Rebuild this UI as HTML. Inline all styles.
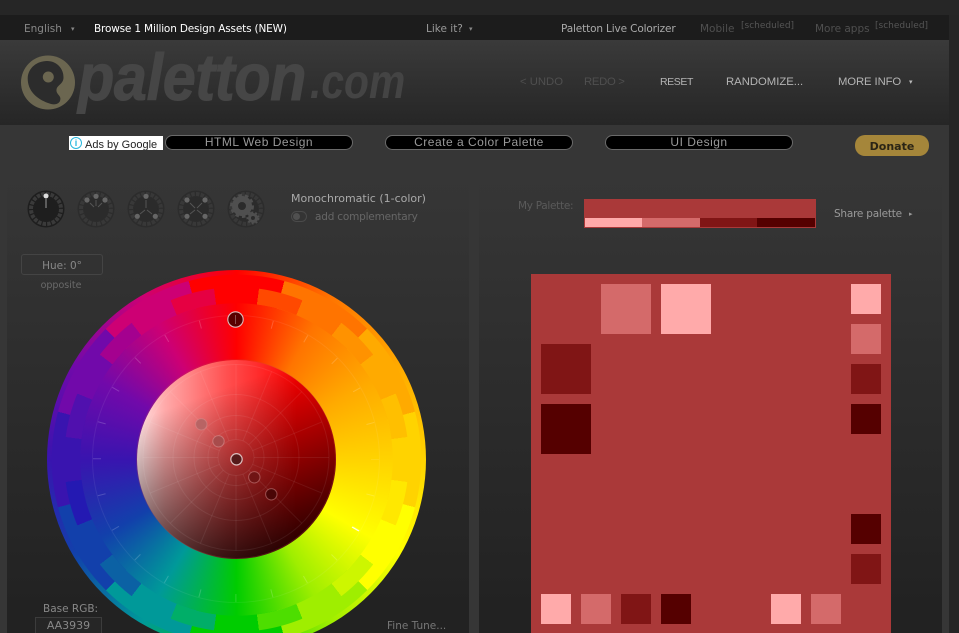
<!DOCTYPE html>
<html><head><meta charset="utf-8"><style>
html,body{margin:0;padding:0;width:959px;height:633px;overflow:hidden;background:#232323;font-family:"DejaVu Sans","Liberation Sans",sans-serif}
#w{position:relative;width:959px;height:633px;overflow:hidden}
.a{position:absolute;white-space:nowrap}
.t{position:absolute;white-space:nowrap;font-size:10.5px;line-height:14px}
.h{position:absolute;white-space:nowrap;font:11.3px/14px "Liberation Sans",sans-serif;top:75px}
.s{position:absolute;background:#aa3939}
.p{position:absolute;box-sizing:border-box;background:#000;border:1px solid #6a6a6a;border-radius:8px;height:15px;top:135px;color:#999;font:12px/13px "Liberation Sans",sans-serif;letter-spacing:.5px;text-align:center}
.r{position:absolute;border-radius:50%}
</style></head><body><div id="w">
<div class="a" style="left:0;top:0;width:959px;height:15px;background:#262626"></div>
<div class="a" style="left:0;top:15px;width:949px;height:25px;background:#1c1c1c"></div>
<div class="a" style="left:0;top:40px;width:949px;height:85px;background:linear-gradient(#3a3a3a,#262626)"></div>
<div class="a" style="left:0;top:125px;width:949px;height:508px;background:#363636"></div>
<div class="a" style="left:7px;top:165px;width:462px;height:468px;background:linear-gradient(#363636,#353535 8%,#222 95%)"></div>
<div class="a" style="left:479px;top:165px;width:463px;height:468px;background:linear-gradient(#363636,#353535 8%,#222 95%)"></div>
<div class="a" style="left:949px;top:15px;width:10px;height:618px;background:#252525"></div>

<div class="t" style="left:24px;top:22px;color:#888">English</div><div class="t" style="left:71px;top:22px;color:#888;font-size:7px">▾</div>
<div class="t" style="left:94px;top:22px;color:#fff;letter-spacing:-.17px">Browse 1 Million Design Assets (NEW)</div>
<div class="t" style="left:426px;top:22px;color:#999">Like it?</div><div class="t" style="left:469px;top:22px;color:#888;font-size:7px">▾</div>
<div class="t" style="left:561px;top:22px;color:#aaa;letter-spacing:-.14px">Paletton Live Colorizer</div>
<div class="t" style="left:700px;top:22px;color:#4f4f4f">Mobile</div>
<div class="t" style="left:741px;top:19px;color:#555;font-size:9px">[scheduled]</div>
<div class="t" style="left:815px;top:22px;color:#4f4f4f">More apps</div>
<div class="t" style="left:875px;top:19px;color:#555;font-size:9px">[scheduled]</div>

<svg class="a" style="left:18px;top:52px" width="60" height="60" viewBox="0 0 60 60">
<circle cx="30" cy="30.500" r="27" fill="#6b6650"/>
<path d="M29 9C39 9 46 17 45.500 26C45 33 38 33 38.500 39C39 43 44 44 42 49C40 53 35 53 30 51C19 47 9.500 39 9.700 26C10 16 19 9 29 9Z" fill="#2c2c2c"/>
<circle cx="30.300" cy="25" r="5.500" fill="#6b6650"/></svg>
<div class="a" style="left:78px;top:37px;font:italic bold 66px/80px 'Liberation Sans',sans-serif;color:#464646;letter-spacing:-.4px;-webkit-text-stroke:1px #464646;transform:scaleX(.9);transform-origin:0 0">paletton</div>
<div class="a" style="left:310px;top:53px;font:italic bold 48px/60px 'Liberation Sans',sans-serif;color:#444;transform:scaleX(.85);transform-origin:0 0">.com</div>

<div class="h" style="left:520px;color:#4f4f4f">&lt; UNDO</div>
<div class="h" style="left:584px;color:#4f4f4f;letter-spacing:-.3px">REDO &gt;</div>
<div class="h" style="left:660px;color:#b4b4b4;font-size:10.5px;letter-spacing:-.4px">RESET</div>
<div class="h" style="left:726px;color:#b4b4b4">RANDOMIZE...</div>
<div class="h" style="left:838px;color:#b4b4b4;letter-spacing:-.1px">MORE INFO</div>
<div class="t" style="left:909px;top:75px;color:#bbb;font-size:7px">▾</div>

<div class="a" style="left:69px;top:136px;width:94px;height:14px;background:#fff;color:#222;font:11px/18px 'Liberation Sans',sans-serif;text-indent:16px;overflow:hidden">Ads by Google</div>
<div class="a" style="left:70px;top:137px;width:10px;height:10px;border:1px solid #28b7dd;border-radius:50%;color:#28b7dd;font:bold 9px/10px 'Liberation Sans',sans-serif;text-align:center">i</div>
<div class="p" style="left:165px;width:188px">HTML Web Design</div>
<div class="p" style="left:385px;width:188px">Create a Color Palette</div>
<div class="p" style="left:605px;width:188px">UI Design</div>
<div class="a" style="left:855px;top:135px;width:74px;height:21px;border-radius:10px;background:#a5863a;color:#2a2415;font:bold 11px/23px 'DejaVu Sans',sans-serif;text-align:center">Donate</div>

<svg class="a" style="left:20px;top:185px" width="250" height="50" viewBox="0 0 250 50">
<defs><g id="k"><circle r="18.500" fill="#2c2c2c"/><circle r="15" fill="none" stroke="#383838" stroke-width="4" stroke-dasharray="3.500 1.200"/><circle r="12" fill="#2b2b2b"/></g></defs>
<g transform="translate(26,24)"><circle r="18.500" fill="#1e1e1e"/><circle r="15" fill="none" stroke="#3a3a3a" stroke-width="4" stroke-dasharray="3.500 1.200"/><circle r="12" fill="#1e1e1e"/><circle cy="-13" r="2.500" fill="#ddd"/><path d="M0-10V-1" stroke="#999"/></g>
<g transform="translate(76,24)" stroke="#555" fill="#666"><use href="#k" stroke="none"/><path d="M0-9V-3M-6-6-2-2M6-6 2-2" fill="none"/><circle cy="-12.700" r="2.600" stroke="none"/><circle cx="-9" cy="-9" r="2.600" stroke="none"/><circle cx="9" cy="-9" r="2.600" stroke="none"/></g>
<g transform="translate(126,24)" stroke="#555" fill="#666"><use href="#k" stroke="none"/><path d="M0-9V-1M-6 5-1 1M6 5 1 1" fill="none"/><circle cy="-12.700" r="2.600" stroke="none"/><circle cx="-8.700" cy="7.300" r="2.600" stroke="none"/><circle cx="9.300" cy="7.300" r="2.600" stroke="none"/></g>
<g transform="translate(176,24)" stroke="#555" fill="#666"><use href="#k" stroke="none"/><path d="M-6-6-1-1M6-6 1-1M-6 5-1 1M6 5 1 1" fill="none"/><circle cx="-9" cy="-9" r="2.600" stroke="none"/><circle cx="9" cy="-9" r="2.600" stroke="none"/><circle cx="-9" cy="7.300" r="2.600" stroke="none"/><circle cx="9" cy="7.300" r="2.600" stroke="none"/></g>
<g transform="translate(226,24)"><use href="#k"/><circle cx="-4" cy="-3" r="7" fill="none" stroke="#4f4f4f" stroke-width="6"/><circle cx="-4" cy="-3" r="10.500" fill="none" stroke="#4f4f4f" stroke-width="3" stroke-dasharray="3.500 3"/><circle cx="7" cy="9" r="3.500" fill="none" stroke="#4f4f4f" stroke-width="3"/><circle cx="7" cy="9" r="5.500" fill="none" stroke="#4f4f4f" stroke-width="2" stroke-dasharray="2 2"/></g>
</svg>
<div class="t" style="left:291px;top:192px;color:#aaa;font-size:11px">Monochromatic (1-color)</div>
<div class="a" style="left:291px;top:211px;width:14px;height:9px;border:1px solid #4a4a4a;border-radius:6px"></div>
<div class="r" style="left:293px;top:213px;width:7px;height:7px;background:#505050"></div>
<div class="t" style="left:315px;top:210px;color:#666;letter-spacing:-.2px">add complementary</div>

<div class="a" style="left:21px;top:254px;width:80px;height:19px;border:1px solid #444;border-radius:3px;color:#888;font-size:10.5px;line-height:22px;text-align:center">Hue: 0°</div>
<div class="a" style="left:21px;top:279px;width:80px;color:#6a6a6a;font-size:9.500px;line-height:14px;text-align:center">opposite</div>
<div class="t" style="left:43px;top:602px;color:#888">Base RGB:</div>
<div class="a" style="left:35px;top:617px;width:65px;height:18px;border:1px solid #3c3c3c;background:#262626;color:#888;font-size:11px;line-height:16px;text-align:center">AA3939</div>
<div class="t" style="left:387px;top:619px;color:#777">Fine Tune...</div>

<!-- hue wheel -->
<div class="r" style="left:46.500px;top:269.500px;width:379px;height:379px;background:conic-gradient(#ff0000 0deg,#ff7400 30deg,#ffaa00 60deg,#ffd300 90deg,#ffff00 120deg,#9fee00 150deg,#00cc00 180deg,#009999 210deg,#1240ab 240deg,#3914af 270deg,#7109aa 300deg,#cd0074 330deg,#ff0000 360deg)"></div>
<div class="r" style="left:46.500px;top:269.500px;width:379px;height:379px;background:conic-gradient(from -15deg,#ff0000 0 30deg,#ff7400 0 60deg,#ffaa00 0 90deg,#ffd300 0 120deg,#ffff00 0 150deg,#9fee00 0 180deg,#00cc00 0 210deg,#009999 0 240deg,#1240ab 0 270deg,#3914af 0 300deg,#7109aa 0 330deg,#cd0074 0 360deg);-webkit-mask:radial-gradient(circle closest-side,transparent 156px,#000 156.500px,#000 184.500px,transparent 185px);mask:radial-gradient(circle closest-side,transparent 156px,#000 156.500px,#000 184.500px,transparent 185px)"></div>
<div class="r" style="left:46.500px;top:269.500px;width:379px;height:379px;background:conic-gradient(transparent 0 7.500deg,#ff4900 0 22.500deg,transparent 0 37.500deg,#ff9200 0 52.500deg,transparent 0 67.500deg,#ffbf00 0 82.500deg,transparent 0 97.500deg,#ffe800 0 112.500deg,transparent 0 127.500deg,#cdf600 0 142.500deg,transparent 0 157.500deg,#4dde00 0 172.500deg,transparent 0 187.500deg,#00ae68 0 202.500deg,transparent 0 217.500deg,#0b61a4 0 232.500deg,transparent 0 247.500deg,#2419b2 0 262.500deg,transparent 0 277.500deg,#5010ae 0 292.500deg,transparent 0 307.500deg,#a4018f 0 322.500deg,transparent 0 337.500deg,#e60042 0 352.500deg,transparent 0);-webkit-mask:radial-gradient(circle closest-side,transparent 156px,#000 156.500px,#000 172px,transparent 172.500px);mask:radial-gradient(circle closest-side,transparent 156px,#000 156.500px,#000 172px,transparent 172.500px)"></div>
<svg class="a" style="left:0;top:0" width="959" height="633" viewBox="0 0 959 633">
<circle cx="236" cy="459" r="143.500" fill="none" stroke="#ffffff" stroke-opacity=".07"/>
<circle cx="236" cy="459" r="139" fill="none" stroke="#ffffff" stroke-opacity=".18" stroke-width="8" stroke-dasharray="1 35.394" stroke-dashoffset=".5"/>
<path d="M352 527 358.900 531" stroke="#ffffff" stroke-width="1.300" stroke-opacity=".9"/>
</svg>

<!-- inner disc -->
<div class="r" style="left:136.500px;top:359.500px;width:199px;height:199px;background:linear-gradient(160deg,rgba(0,0,0,0) 22%,rgba(0,0,0,1) 102%),linear-gradient(90deg,#ffe4e4 0,#ffaaaa 14%,#ff5050 45%,#f00 80%)"></div>
<svg class="a" style="left:0;top:0" width="959" height="633" viewBox="0 0 959 633">
<circle cx="236" cy="459" r="99.500" fill="none" stroke="#cc4444" stroke-opacity=".25"/>
<g fill="none" stroke="#ffffff" stroke-opacity=".07">
<circle cx="236" cy="457.500" r="18"/><circle cx="236" cy="457.500" r="28"/><circle cx="236" cy="457.500" r="42"/><circle cx="236" cy="457.500" r="63"/><circle cx="236" cy="457.500" r="93"/>
<path d="M236 364.500V439.500M236 475.500V550.500M143 457.500H218M254 457.500H329M170.200 391.700 223.300 444.800M301.800 391.700 248.700 444.800M170.200 523.300 223.300 470.200M301.800 523.300 248.700 470.200M200.400 371.600 229.100 440.900M271.600 371.600 242.900 440.900M200.400 543.400 229.100 474.100M271.600 543.400 242.900 474.100M150.100 421.900 219.400 450.600M321.900 421.900 252.600 450.600M150.100 493.100 219.400 464.400M321.900 493.100 252.600 464.400"/>
</g>
<circle cx="201.300" cy="424.300" r="5.700" fill="#b86464" stroke="#d89090" stroke-opacity=".5"/>
<circle cx="218.500" cy="441.300" r="5.700" fill="#a84c4c" stroke="#d89090" stroke-opacity=".6"/>
<circle cx="254.300" cy="477.300" r="5.700" fill="#701414" stroke="#d89090" stroke-opacity=".5"/>
<circle cx="271.300" cy="494.300" r="5.700" fill="#4a0606" stroke="#d89090" stroke-opacity=".5"/>
<circle cx="236.500" cy="459.300" r="5.700" fill="#551a1a" stroke="#dcbcbc" stroke-width="1.200"/>
<circle cx="235.500" cy="319.500" r="7.700" fill="#580000" stroke="#dcbcbc" stroke-width="1.100"/>
<path d="M235.500 315V324" stroke="#ffffff" stroke-opacity=".3"/>
</svg>

<!-- right -->
<div class="t" style="left:518px;top:199px;color:#5a5a5a;letter-spacing:-.3px">My Palette:</div>
<div class="s" style="left:584px;top:199px;width:232px;height:29px"></div>
<div class="s" style="left:585px;top:218px;width:57px;height:9px;background:#ffaaaa"></div>
<div class="s" style="left:642px;top:218px;width:58px;height:9px;background:#d46a6a"></div>
<div class="s" style="left:700px;top:218px;width:57px;height:9px;background:#801515"></div>
<div class="s" style="left:757px;top:218px;width:58px;height:9px;background:#550000"></div>
<div class="t" style="left:834px;top:207px;color:#999;letter-spacing:-.23px">Share palette</div>
<div class="t" style="left:909px;top:207px;color:#999;font-size:7px">▸</div>

<div class="s" style="left:531px;top:274px;width:360px;height:359px"></div>
<div class="s" style="left:601px;top:284px;width:50px;height:50px;background:#d46a6a"></div>
<div class="s" style="left:661px;top:284px;width:50px;height:50px;background:#ffaaaa"></div>
<div class="s" style="left:541px;top:344px;width:50px;height:50px;background:#801515"></div>
<div class="s" style="left:541px;top:404px;width:50px;height:50px;background:#550000"></div>
<div class="s" style="left:851px;top:284px;width:30px;height:30px;background:#ffaaaa"></div>
<div class="s" style="left:851px;top:324px;width:30px;height:30px;background:#d46a6a"></div>
<div class="s" style="left:851px;top:364px;width:30px;height:30px;background:#801515"></div>
<div class="s" style="left:851px;top:404px;width:30px;height:30px;background:#550000"></div>
<div class="s" style="left:851px;top:514px;width:30px;height:30px;background:#550000"></div>
<div class="s" style="left:851px;top:554px;width:30px;height:30px;background:#801515"></div>
<div class="s" style="left:541px;top:594px;width:30px;height:30px;background:#ffaaaa"></div>
<div class="s" style="left:581px;top:594px;width:30px;height:30px;background:#d46a6a"></div>
<div class="s" style="left:621px;top:594px;width:30px;height:30px;background:#801515"></div>
<div class="s" style="left:661px;top:594px;width:30px;height:30px;background:#550000"></div>
<div class="s" style="left:771px;top:594px;width:30px;height:30px;background:#ffaaaa"></div>
<div class="s" style="left:811px;top:594px;width:30px;height:30px;background:#d46a6a"></div>
</div></body></html>
